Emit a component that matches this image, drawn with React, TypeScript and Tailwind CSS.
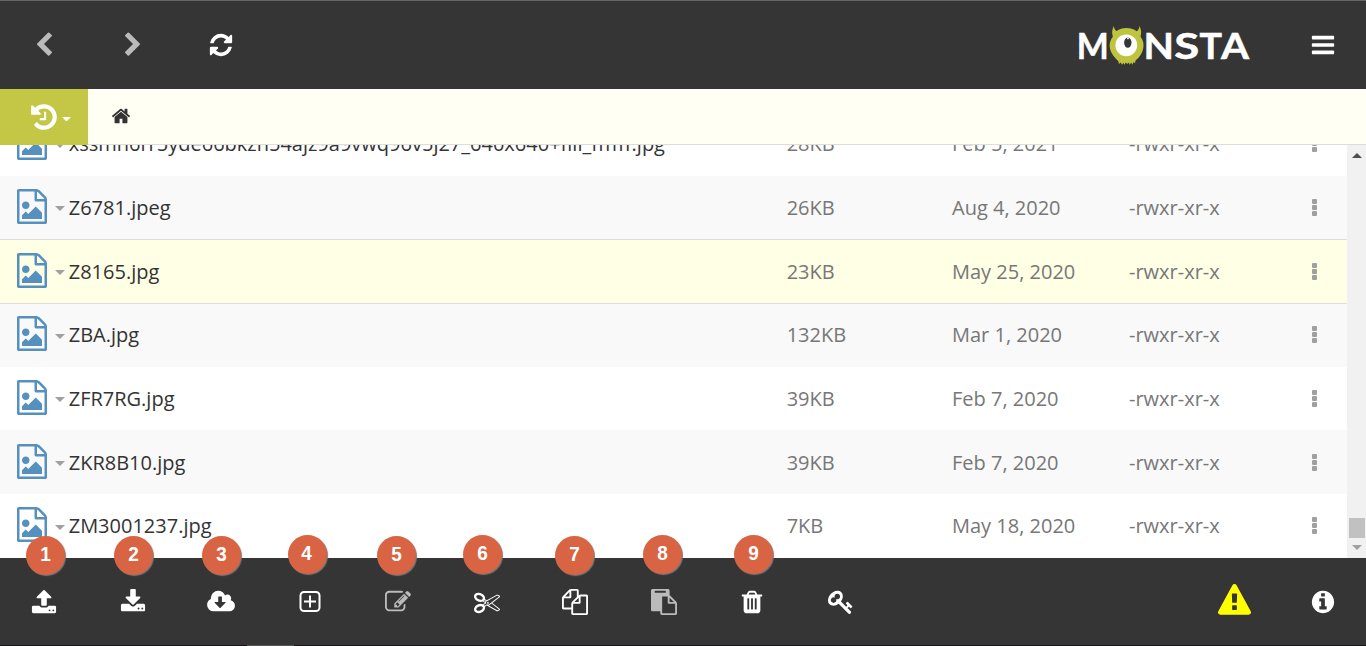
import React from "react";
import clsx from "clsx";

const paths = {
  chevronLeft:
    "M1427 301l-531 531 531 531q19 19 19 45t-19 45l-166 166q-19 19-45 19t-45-19l-742-742q-19-19-19-45t19-45l742-742q19-19 45-19t45 19l166 166q19 19 19 45t-19 45z",
  chevronRight:
    "M1363 877l-742 742q-19 19-45 19t-45-19l-166-166q-19-19-19-45t19-45l531-531-531-531q-19-19-19-45t19-45l166-166q19-19 45-19t45 19l742 742q19 19 19 45t-19 45z",
  refresh:
    "M1639 1056q0 5-1 7-64 268-268 434.500t-478 166.500q-146 0-282.500-55t-243.500-157l-129 129q-19 19-45 19t-45-19-19-45v-448q0-26 19-45t45-19h448q26 0 45 19t19 45-19 45l-137 137q71 66 161 102t187 36q134 0 250-65t186-179q11-17 53-117 8-23 30-23h192q13 0 22.500 9.500t9.500 22.500zm25-800v448q0 26-19 45t-45 19h-448q-26 0-45-19t-19-45 19-45l138-138q-148-137-349-137-134 0-250 65t-186 179q-11 17-53 117-8 23-30 23h-199q-13 0-22.500-9.500t-9.500-22.500v-7q65-268 270-434.500t480-166.500q146 0 284 55.500t245 156.500l130-129q19-19 45-19t45 19 19 45z",
  bars: "M1664 1344v128q0 26-19 45t-45 19h-1408q-26 0-45-19t-19-45v-128q0-26 19-45t45-19h1408q26 0 45 19t19 45zm0-512v128q0 26-19 45t-45 19h-1408q-26 0-45-19t-19-45v-128q0-26 19-45t45-19h1408q26 0 45 19t19 45zm0-512v128q0 26-19 45t-45 19h-1408q-26 0-45-19t-19-45v-128q0-26 19-45t45-19h1408q26 0 45 19t19 45z",
  home: "M1472 992v480q0 26-19 45t-45 19h-384v-384h-256v384h-384q-26 0-45-19t-19-45v-480q0-1 .5-3t.5-3l575-474 575 474q1 2 1 6zm223-69l-62 74q-8 9-21 11h-3q-13 0-21-7l-692-577-692 577q-12 8-24 7-13-2-21-11l-62-74q-8-10-7-23.500t11-21.500l719-599q32-26 76-26t76 26l244 204v-195q0-14 9-23t23-9h192q14 0 23 9t9 23v408l219 182q10 8 11 21.500t-7 23.500z",
  history:
    "M1664 896q0 156-61 298t-164 245-245 164-298 61q-172 0-327-72.500t-264-204.500q-7-10-6.500-22.500t8.500-20.500l137-138q10-9 25-9 16 2 23 12 73 95 179 147t225 52q104 0 198.500-40.500t163.500-109.500 109.500-163.500 40.500-198.500-40.500-198.500-109.500-163.500-163.500-109.500-198.500-40.500q-98 0-188 35.500t-160 101.500l137 138q31 30 14 69-17 40-59 40h-448q-26 0-45-19t-19-45v-448q0-42 40-59 39-17 69 14l130 129q107-101 244.500-156.500t284.500-55.500q156 0 298 61t245 164 164 245 61 298zm-640-288v448q0 14-9 23t-23 9h-320q-14 0-23-9t-9-23v-64q0-14 9-23t23-9h224v-352q0-14 9-23t23-9h64q14 0 23 9t9 23z",
  upload:
    "M1344 1472q0-26-19-45t-45-19-45 19-19 45 19 45 45 19 45-19 19-45zm256 0q0-26-19-45t-45-19-45 19-19 45 19 45 45 19 45-19 19-45zm128-224v320q0 40-28 68t-68 28h-1472q-40 0-68-28t-28-68v-320q0-40 28-68t68-28h427q21 56 70.500 92t110.500 36h256q61 0 110.500-36t70.500-92h427q40 0 68 28t28 68zm-325-648q-17 40-59 40h-256v448q0 26-19 45t-45 19h-256q-26 0-45-19t-19-45v-448h-256q-42 0-59-40-17-39 14-69l448-448q18-19 45-19t45 19l448 448q31 30 14 69z",
  download:
    "M1344 1344q0-26-19-45t-45-19-45 19-19 45 19 45 45 19 45-19 19-45zm256 0q0-26-19-45t-45-19-45 19-19 45 19 45 45 19 45-19 19-45zm128-224v320q0 40-28 68t-68 28h-1472q-40 0-68-28t-28-68v-320q0-40 28-68t68-28h465l135 136q58 56 136 56t136-56l136-136h464q40 0 68 28t28 68zm-325-569q17 41-14 70l-448 448q-18 19-45 19t-45-19l-448-448q-31-29-14-70 17-39 59-39h256v-448q0-26 19-45t45-19h256q26 0 45 19t19 45v448h256q42 0 59 39z",
  cloud:
    "M1216 928q0-14-9-23t-23-9h-224v-352q0-13-9.500-22.500t-22.500-9.500h-192q-13 0-22.500 9.500t-9.500 22.500v352h-224q-13 0-22.500 9.500t-9.500 22.500q0 14 9 23l352 352q9 9 23 9t23-9l351-351q10-12 10-24zm640 224q0 159-112.500 271.500t-271.500 112.500h-1088q-185 0-316.500-131.500t-131.500-316.500q0-130 70-240t188-165q-2-30-2-43 0-212 150-362t362-150q156 0 285.500 87t188.500 231q71-62 166-62 106 0 181 75t75 181q0 76-41 138 130 31 213.500 135.500t83.500 238.500z",
  edit: "M888 1184l116-116-152-152-116 116v56h96v96h56zm440-720q-16-16-33 1l-350 350q-17 17-1 33t33-1l350-350q17-17 1-33zm80 594v190q0 119-84.500 203.500t-203.500 84.500h-832q-119 0-203.500-84.500t-84.500-203.500v-832q0-119 84.500-203.500t203.500-84.500h832q63 0 117 25 15 7 18 23 3 17-9 29l-49 49q-14 14-32 8-23-6-45-6h-832q-66 0-113 47t-47 113v832q0 66 47 113t113 47h832q66 0 113-47t47-113v-126q0-13 9-22l64-64q15-15 35-7t20 29zm-96-738l288 288-672 672h-288v-288zm444 132l-92 92-288-288 92-92q28-28 68-28t68 28l152 152q28 28 28 68t-28 68z",
  cut: "M960 896q26 0 45 19t19 45-19 45-45 19-45-19-19-45 19-45 45-19zm300 64l507 398q28 20 25 56-5 35-35 51l-128 64q-13 7-29 7-17 0-31-8l-690-387-110 66q-8 4-12 5 14 49 10 97-7 77-56 147.500t-132 123.500q-132 84-277 84-136 0-222-78-90-84-79-207 7-76 56-147t131-124q132-84 278-84 83 0 151 31 9-13 22-22l122-73-122-73q-13-9-22-22-68 31-151 31-146 0-278-84-82-53-131-124t-56-147q-5-59 15.500-113t63.500-93q85-79 222-79 145 0 277 84 83 52 132 123t56 148q4 48-10 97 4 1 12 5l110 66 690-387q14-8 31-8 16 0 29 7l128 64q30 16 35 51 3 36-25 56zm-681-260q46-42 21-108t-106-117q-92-59-192-59-74 0-113 36-46 42-21 108t106 117q92 59 192 59 74 0 113-36zm-85 745q81-51 106-117t-21-108q-39-36-113-36-100 0-192 59-81 51-106 117t21 108q39 36 113 36 100 0 192-59zm178-613l96 58v-11q0-36 33-56l14-8-79-47-26 26q-3 3-10 11t-12 12q-2 2-4 3.500t-3 2.500zm224 224l96 32 736-576-128-64-768 431v113l-160 96 9 8q2 2 7 6 4 4 11 12t11 12l26 26zm704 416l128-64-520-408-177 138q-2 3-13 7z",
  copy: "M1696 384q40 0 68 28t28 68v1216q0 40-28 68t-68 28h-960q-40 0-68-28t-28-68v-288h-544q-40 0-68-28t-28-68v-672q0-40 20-88t48-76l408-408q28-28 76-48t88-20h416q40 0 68 28t28 68v328q68-40 128-40h416zm-544 213l-299 299h299v-299zm-640-384l-299 299h299v-299zm196 647l316-316v-416h-384v416q0 40-28 68t-68 28h-416v640h512v-256q0-40 20-88t48-76zm956 804v-1152h-384v416q0 40-28 68t-68 28h-416v640h896z",
  paste:
    "M768 1664h896v-640h-416q-40 0-68-28t-28-68v-416h-384v1152zm256-1440v-64q0-13-9.500-22.500t-22.500-9.500h-704q-13 0-22.500 9.500t-9.500 22.500v64q0 13 9.500 22.500t22.500 9.500h704q13 0 22.500-9.500t9.500-22.500zm256 672h299l-299-299v299zm512 128v672q0 40-28 68t-68 28h-960q-40 0-68-28t-28-68v-160h-544q-40 0-68-28t-28-68v-1344q0-40 28-68t68-28h1088q40 0 68 28t28 68v328q21 13 36 28l408 408q28 28 48 76t20 88z",
  trash:
    "M704 1376v-704q0-14-9-23t-23-9h-64q-14 0-23 9t-9 23v704q0 14 9 23t23 9h64q14 0 23-9t9-23zm256 0v-704q0-14-9-23t-23-9h-64q-14 0-23 9t-9 23v704q0 14 9 23t23 9h64q14 0 23-9t9-23zm256 0v-704q0-14-9-23t-23-9h-64q-14 0-23 9t-9 23v704q0 14 9 23t23 9h64q14 0 23-9t9-23zm-544-992h448l-48-117q-7-9-17-11h-317q-10 2-17 11zm928 32v64q0 14-9 23t-23 9h-96v948q0 83-47 143.500t-113 60.500h-832q-66 0-113-58.500t-47-141.500v-952h-96q-14 0-23-9t-9-23v-64q0-14 9-23t23-9h309l70-167q15-37 54-63t79-26h320q40 0 79 26t54 63l70 167h309q14 0 23 9t9 23z",
  key: "M832 512q0-80-56-136t-136-56-136 56-56 136q0 42 19 83-41-19-83-19-80 0-136 56t-56 136 56 136 136 56 136-56 56-136q0-42-19-83 41 19 83 19 80 0 136-56t56-136zm851 704q0 17-49 66t-66 49q-9 0-28.500-16t-36.500-33-38.500-40-24.500-26l-96 96 220 220q28 28 28 68 0 42-39 81t-81 39q-40 0-68-28l-671-671q-176 131-365 131-163 0-265.500-102.500t-102.500-265.500q0-160 95-313t248-248 313-95q163 0 265.500 102.500t102.500 265.500q0 189-131 365l355 355 96-96q-3-3-26-24.500t-40-38.500-33-36.500-16-28.500q0-17 49-66t66-49q13 0 23 10 6 6 46 44.500t82 79.500 86.500 86 73 78 28.500 41z",
  warning:
    "M1024 1375v-190q0-14-9.500-23.500t-22.500-9.500h-192q-13 0-22.500 9.500t-9.500 23.500v190q0 14 9.500 23.500t22.500 9.500h192q13 0 22.500-9.500t9.500-23.500zm-2-374l18-459q0-12-10-19-13-11-24-11h-220q-11 0-24 11-10 7-10 21l17 457q0 10 10 16.500t24 6.500h185q14 0 23.500-6.500t10.500-16.500zm-14-934l768 1408q35 63-2 126-17 29-46.500 46t-63.500 17h-1536q-34 0-63.500-17t-46.500-46q-37-63-2-126l768-1408q17-31 47-49t65-18 65 18 47 49z",
  info: "M1152 1376v-160q0-14-9-23t-23-9h-96v-512q0-14-9-23t-23-9h-320q-14 0-23 9t-9 23v160q0 14 9 23t23 9h96v320h-96q-14 0-23 9t-9 23v160q0 14 9 23t23 9h448q14 0 23-9t9-23zm-128-896v-160q0-14-9-23t-23-9h-192q-14 0-23 9t-9 23v160q0 14 9 23t23 9h192q14 0 23-9t9-23zm640 416q0 209-103 385.500t-279.500 279.500-385.500 103-385.500-103-279.500-279.500-103-385.500 103-385.500 279.500-279.500 385.500-103 385.500 103 279.500 279.500 103 385.500z",
};

type IconName = keyof typeof paths;

const Icon = ({ name, className = "size-[26px]" }: { name: IconName; className?: string }) => (
  <svg viewBox="0 0 1792 1792" fill="currentColor" className={clsx("shrink-0 overflow-visible", className)}>
    <path d={paths[name]} />
  </svg>
);

// narrower box than the other icons, so the sheet sits flush with the row padding
const FileImageIcon = () => (
  <svg viewBox="128 0 1536 1792" fill="currentColor" className="w-[30px] h-[35px] mb-[3px] shrink-0 text-[#5590bf]">
    <path d="M1596 380q28 28 48 76t20 88v1152q0 40-28 68t-68 28h-1344q-40 0-68-28t-28-68v-1600q0-40 28-68t68-28h896q40 0 88 20t76 48zm-444-244v376h376q-10-29-22-41l-313-313q-12-12-41-22zm384 1528v-1024h-416q-40 0-68-28t-28-68v-416h-768v1536h1280zm-128-448v320h-1024v-192l192-192 128 128 384-384zm-832-192q-80 0-136-56t-56-136 56-136 136-56 136 56 56 136-56 136-136 56z" />
  </svg>
);

const PlusIcon = () => (
  <svg viewBox="0 0 26 26" fill="none" stroke="currentColor" strokeWidth="2" className="size-[26px] shrink-0">
    <rect x="3.5" y="3" width="19" height="19" rx="3.5" />
    <path d="M13 6.5v12M7 12.5h12" />
  </svg>
);

const Caret = ({ className }: { className: string }) => (
  <svg viewBox="0 0 10 5" fill="currentColor" className={clsx("shrink-0", className)}>
    <path d="M0 0h10l-5 5z" />
  </svg>
);

const Logo = () => (
  <svg viewBox="0 0 172 42" className="w-[172px] h-[42px] overflow-visible">
    <g fill="#fff" stroke="#fff" strokeWidth="0.5" fontFamily="Lato" fontWeight="700" fontSize="36.5">
      <text x="-2.2" y="34.8" textLength="32" lengthAdjust="spacingAndGlyphs">M</text>
      <text x="64.5" y="34.8" textLength="30.5" lengthAdjust="spacingAndGlyphs">N</text>
      <text x="95.3" y="34.8" textLength="25" lengthAdjust="spacingAndGlyphs">S</text>
      <text x="120.6" y="34.8" textLength="22.5" lengthAdjust="spacingAndGlyphs">T</text>
      <text x="142" y="34.8" textLength="28" lengthAdjust="spacingAndGlyphs">A</text>
    </g>
    <path
      fill="#bec43e"
      d="M34.800 2c-1.800 3.500-2.200 7.500-.9 10.500-2.800 3.800-3.800 7.500-3 11.800 1 5 4.600 9.500 8.400 12.700l.6 3 1.800-1.400 1.300 2.200 1.500-2 .8 2 1.500-2.200 1.400 1.400 1.500-1.400.9 2.200 1.500-2.300 1.300 2.200 1-2.600 1.600 1.200.5-2.700c4.200-3.200 6.700-7.300 7.700-12 .9-4.200.1-8.200-2.700-12 1.200-3.200.8-7.200-1-10.600-.4 2.500-1.200 4.300-2.800 5.300-2.900-2.200-6.500-3.200-10.300-3.200s-7 1-9.800 3c-1.700-1-2.600-2.800-2.800-5.100z"
    />
    <circle cx="47.300" cy="21.300" r="10.900" fill="#fff" />
    <ellipse cx="48.800" cy="18.600" rx="3.700" ry="5.200" fill="#353535" />
    <circle cx="49" cy="14.400" r="0.900" fill="#fff" />
  </svg>
);

const files = [
  { name: "xssmh6rr5yde66bkzh54ajz9a9vwq96v5j27_640x640+fill_ffffff.jpg", size: "28KB", date: "Feb 5, 2021" },
  { name: "Z6781.jpeg", size: "26KB", date: "Aug 4, 2020" },
  { name: "Z8165.jpg", size: "23KB", date: "May 25, 2020" },
  { name: "ZBA.jpg", size: "132KB", date: "Mar 1, 2020" },
  { name: "ZFR7RG.jpg", size: "39KB", date: "Feb 7, 2020" },
  { name: "ZKR8B10.jpg", size: "39KB", date: "Feb 7, 2020" },
  { name: "ZM3001237.jpg", size: "7KB", date: "May 18, 2020" },
];

const rowStyle = (i: number) => {
  if (i === 2) return "bg-[#ffffe5] border-[#ddd]";
  if (i === 3) return "bg-[#f9f9f9] border-[#ddd]";
  return i % 2 ? "bg-[#f9f9f9] border-[#f9f9f9]" : "bg-white border-white";
};

const FileList = () => (
  <div className="flex-1 min-w-0 flex flex-col justify-end overflow-hidden pb-[0.3px] text-xl text-[#777]">
    {files.map((file, i) => (
      <div
        key={file.name}
        className={clsx("flex items-center shrink-0 h-[63.7px] pl-[17px] border-t whitespace-nowrap", rowStyle(i))}
      >
        <FileImageIcon />
        <Caret className="w-[10px] h-[5px] ml-2 mr-[3.7px] mt-[2px] text-[#a0a0a0]" />
        <span className="w-[718px] text-[#333]">{file.name}</span>
        <span className="w-[165.3px]">{file.size}</span>
        <span className="w-[177px]">{file.date}</span>
        <span className="w-[183px]">-rwxr-xr-x</span>
        <span className="flex flex-col gap-px mb-px">
          <i className="size-[5px] rounded-[1px] bg-[#a0a0a0]" />
          <i className="size-[5px] rounded-[1px] bg-[#a0a0a0]" />
          <i className="size-[5px] rounded-[1px] bg-[#a0a0a0]" />
        </span>
      </div>
    ))}
  </div>
);

const Scrollbar = () => (
  <div className="w-[19px] bg-[#f1f1f1] flex flex-col items-center">
    <Caret className="w-[10px] h-[5px] mt-2 rotate-180 text-[#505050]" />
    <div className="flex-1" />
    <div className="w-4 h-5 ml-px bg-[#c1c1c1]" />
    <Caret className="w-[10px] h-[5px] mt-[7px] mb-2 text-[#a0a0a0]" />
  </div>
);

const Badge = ({ n, className }: { n: number; className: string }) => (
  <span
    className={clsx(
      "absolute size-[39px] rounded-full bg-[#d96444] shadow-[1px_1px_1px_#777] flex items-center justify-center pb-[2px] font-['Liberation_Sans',sans-serif] font-bold text-xl text-white",
      className
    )}
  >
    <span className="scale-x-95">{n}</span>
  </span>
);

const tools: { icon: IconName | "plus"; badge?: string; muted?: boolean }[] = [
  { icon: "upload", badge: "left-[25.6px] -top-[22.5px]" },
  { icon: "download", badge: "left-[25.2px] -top-[22.5px]" },
  { icon: "cloud", badge: "left-[25.4px] -top-[22.5px]" },
  { icon: "plus", badge: "left-[22px] -top-[23.5px]" },
  { icon: "edit", badge: "left-[22.7px] -top-[22.5px]", muted: true },
  { icon: "cut", badge: "left-[20.8px] -top-[23.5px]" },
  { icon: "copy", badge: "left-[23.6px] -top-[22.5px]" },
  { icon: "paste", badge: "left-[23.8px] -top-[23.5px]", muted: true },
  { icon: "trash", badge: "left-[26.3px] -top-[23.5px]" },
  { icon: "key" },
];

const App = () => {
  return (
    <div className="w-[1366px] h-[646px] flex flex-col overflow-hidden bg-white font-['Open_Sans',sans-serif]">
      <header className="h-[89px] shrink-0 flex items-center justify-between bg-[#353535] border-t border-[#666] text-white">
        <nav className="flex items-center">
          <div className="w-[88px] flex justify-center text-[#bbb]">
            <Icon name="chevronLeft" />
          </div>
          <div className="w-[90px] flex justify-center text-[#bbb]">
            <Icon name="chevronRight" />
          </div>
          <div className="w-[86px] flex justify-center">
            <Icon name="refresh" />
          </div>
        </nav>
        <div className="flex items-center">
          <Logo />
          <div className="ml-[59px] mr-[30px]">
            <Icon name="bars" />
          </div>
        </div>
      </header>
      <div className="h-14 shrink-0 flex bg-[#fffff3]">
        <div className="w-[88px] flex items-center pl-[29px] bg-[#c4c645] text-white">
          <Icon name="history" className="size-[30px]" />
          <Caret className="w-[9px] h-[4.5px] ml-[3px] mt-1" />
        </div>
        <div className="flex-1 flex items-center pl-[23.4px] pb-px border-b border-[#ddd] text-[#333]">
          <Icon name="home" className="size-[20px]" />
        </div>
      </div>
      <main className="flex-1 min-h-0 flex">
        <FileList />
        <Scrollbar />
      </main>
      <footer className="h-[88px] shrink-0 flex flex-col justify-between bg-[#353535] text-white">
        <div className="h-[87px] flex justify-between">
          <div className="flex">
            {tools.map((tool, i) => (
              <div
                key={tool.icon}
                className={clsx("relative w-[88.5px] flex items-center justify-center", tool.muted && "text-[#bbb]")}
              >
                {tool.icon === "plus" ? <PlusIcon /> : <Icon name={tool.icon} />}
                {tool.badge && <Badge n={i + 1} className={tool.badge} />}
              </div>
            ))}
          </div>
          <div className="flex items-center">
            <div className="mr-[59px] mb-[2px] text-[#ffff00]">
              <Icon name="warning" className="size-[33px]" />
            </div>
            <div className="mr-[30px]">
              <Icon name="info" />
            </div>
          </div>
        </div>
        <div className="h-px bg-[#1c1418] pl-[247px]">
          <div className="w-[47px] h-px bg-[#555]" />
        </div>
      </footer>
    </div>
  );
};

export default App;
